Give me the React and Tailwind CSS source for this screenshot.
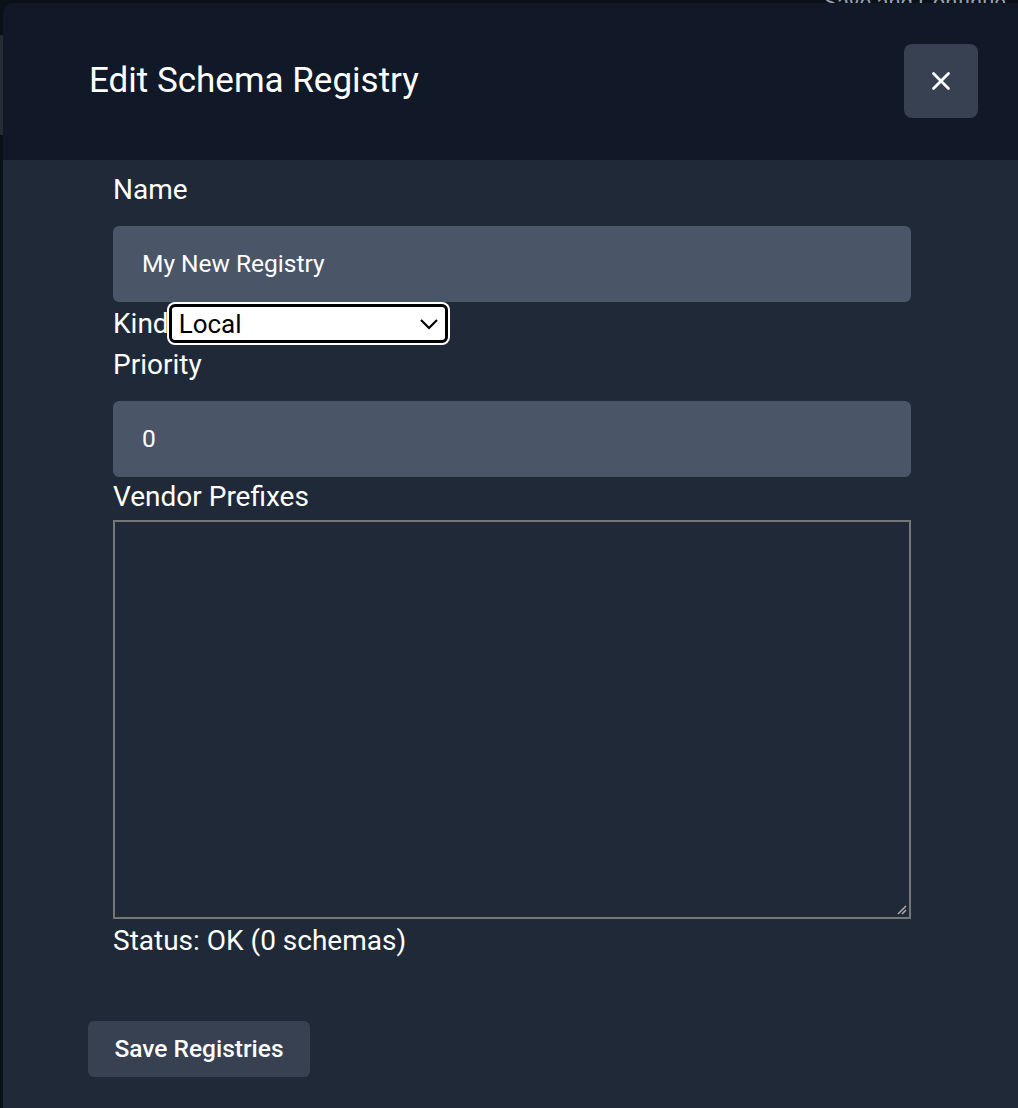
import { X } from "lucide-react";

function Field({ label, gap, children }) {
  return (
    <div className="flex flex-col">
      <label className="text-[28px] leading-[40px] text-white">{label}</label>
      <div style={{ marginTop: gap }}>{children}</div>
    </div>
  );
}

export default function App() {
  return (
    <div
      className="relative w-[1018px] h-[1108px] overflow-hidden bg-[#0b1119]"
      style={{ fontFamily: "Roboto, 'Noto Sans', sans-serif" }}
    >
      {/* page behind the dialog */}
      <div className="absolute left-0 top-[35px] w-[3px] h-[100px] bg-[#242c36]" />
      <div className="absolute left-[824px] top-[-14px] text-[22px] text-gray-400 whitespace-nowrap">
        Save and Continue
      </div>

      <div className="absolute left-[3px] top-[3px] right-0 bottom-0 flex flex-col rounded-tl-[10px] overflow-hidden">
        {/* header */}
        <div className="h-[157px] bg-[#111827] flex items-center justify-between pl-[86px] pr-[40px] shrink-0">
          <h2 className="text-[35px] text-white">Edit Schema Registry</h2>
          <button className="w-[74px] h-[74px] rounded-lg bg-[#374151] flex items-center justify-center mt-[-2px]">
            <X className="w-[30px] h-[30px] text-white" strokeWidth={2.2} />
          </button>
        </div>

        {/* body */}
        <div className="flex-1 bg-[#1f2937] pl-[85px] pt-[10px]">
          <div className="w-[798px] ml-[25px] flex flex-col">
            <Field label="Name" gap={16}>
              <div className="h-[76px] rounded-md bg-[#4a5568] flex items-center pl-[29px] text-[24.5px] text-white">
                My New Registry
              </div>
            </Field>

            <div className="flex items-center h-[43px]">
              <span className="text-[28px] text-white">Kind</span>
              <div className="w-[279px] h-[39px] bg-white border-[3px] border-black rounded-md ring-2 ring-white flex items-center justify-between pl-[7px] pr-[6px]">
                <span className="text-[26px] text-black leading-none">Local</span>
                <svg width="20" height="14" viewBox="0 0 20 14" fill="none">
                  <path d="M2 3 L10 11 L18 3" stroke="black" strokeWidth="2.2" />
                </svg>
              </div>
            </div>

            <Field label="Priority" gap={16}>
              <div className="h-[76px] rounded-md bg-[#4a5568] flex items-center pl-[29px] text-[24.5px] text-white">
                0
              </div>
            </Field>

            <Field label="Vendor Prefixes" gap={3}>
              <div className="relative h-[399px] border-2 border-[#767676]">
                <svg className="absolute right-[2px] bottom-[2px]" width="12" height="12" viewBox="0 0 12 12">
                  <path d="M11 3 L3 11 M11 7 L7 11" stroke="#aaa" strokeWidth="1.6" />
                </svg>
              </div>
            </Field>

            <div className="text-[28px] leading-[40px] text-white mt-[2px]">Status: OK (0 schemas)</div>
          </div>

          <button className="mt-[60px] w-[222px] h-[56px] rounded-md bg-[#374151] text-white text-[24.5px] font-medium">
            Save Registries
          </button>
        </div>
      </div>
    </div>
  );
}
